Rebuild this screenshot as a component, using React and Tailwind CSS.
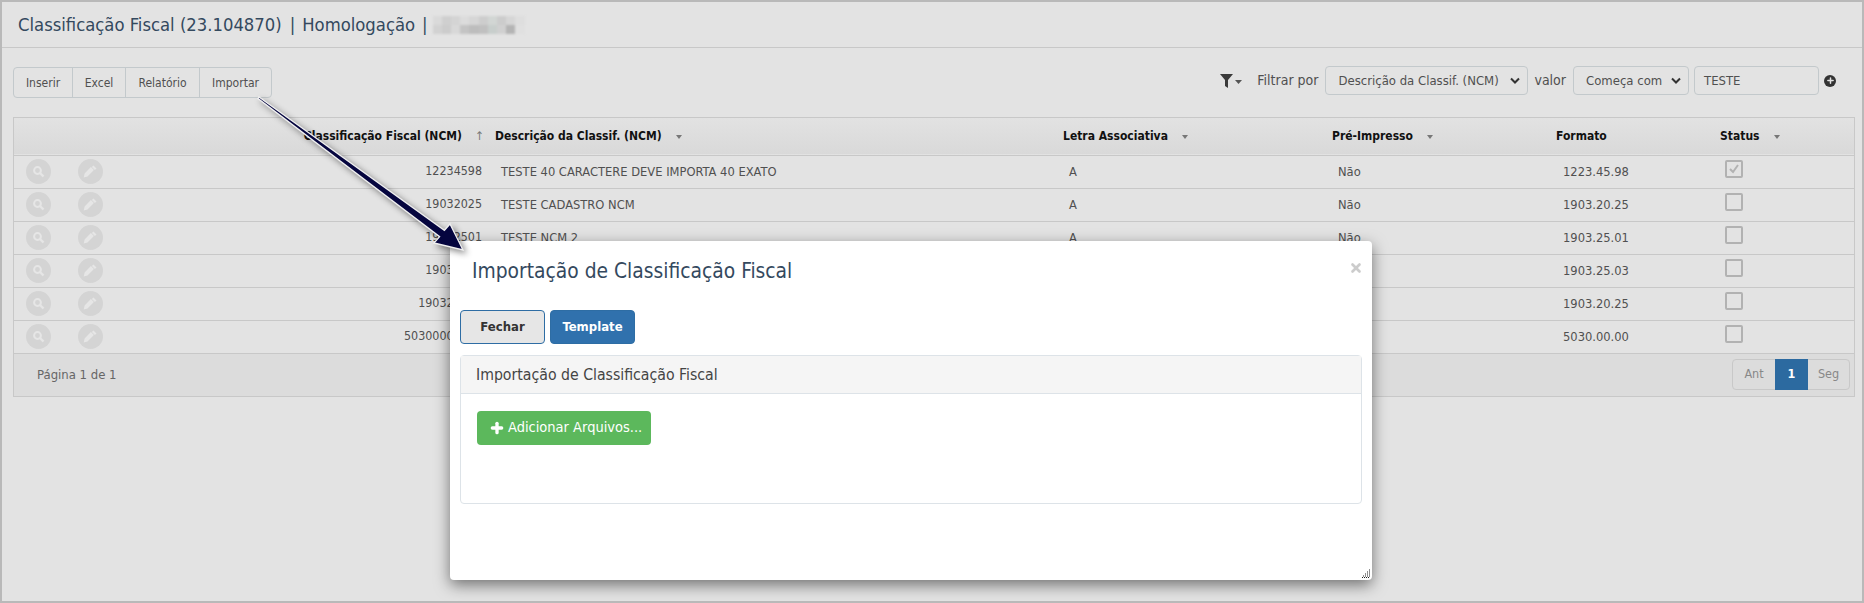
import React from 'react';
import { Plus, X } from 'lucide-react';

const rows = [
  { ncm: '12234598', desc: 'TESTE 40 CARACTERE DEVE IMPORTA 40 EXATO', fmt: '1223.45.98', on: true },
  { ncm: '19032025', desc: 'TESTE CADASTRO NCM', fmt: '1903.20.25' },
  { ncm: '19032501', desc: 'TESTE NCM 2', fmt: '1903.25.01' },
  { ncm: '19032503', desc: 'TESTE NCM 3', fmt: '1903.25.03' },
  { ncm: '190320251', desc: 'TESTE NCM 4', fmt: '1903.20.25' },
  { ncm: '50300000000', desc: 'TESTE NCM 5', fmt: '5030.00.00' },
];

// pixelated name in the title
const mosaicTop = ['bg-[#dadada]', 'bg-[#cfcfcf]', 'bg-[#d4d4d4]', 'bg-[#dcdcdc]', 'bg-[#d6d6d6]', 'bg-[#cdcdcd]', 'bg-[#d2d6d4]', 'bg-[#cccccc]', 'bg-[#d6d6d6]', 'bg-[#dedede]'];
const mosaicBottom = ['bg-[#d2d2d2]', 'bg-[#cccccc]', 'bg-[#d8d8d8]', 'bg-[#c4c4c4]', 'bg-[#bdbdbd]', 'bg-[#c0c0c0]', 'bg-[#c8cecc]', 'bg-[#d0d0d0]', 'bg-[#b4b4b4]', 'bg-[#e0e0e0]'];

const Caret = () => <span className="inline-block ml-[14px] align-middle border-x-[3px] border-t-[4px] border-x-transparent border-t-[#777]" />;

const Chev = () => (
  <svg width="10" height="8" viewBox="0 0 10 8" fill="none" stroke="#333" strokeWidth="2"><path d="M1 1.5l4 4 4-4" /></svg>
);

const RoundIcon = ({ kind }) => (
  <span className="w-[25px] h-[25px] rounded-full bg-[#d4d4d4] flex items-center justify-center">
    {kind === 'search' ? (
      <svg width="13" height="13" viewBox="0 0 13 13" fill="none" stroke="#e6e6e6"><circle cx="5.5" cy="5.5" r="3.4" strokeWidth="2" /><path d="M8 8l3.5 3.5" strokeWidth="2.4" /></svg>
    ) : (
      <svg width="15" height="15" viewBox="0 0 15 15" fill="#e6e6e6"><path d="M10.5 1.5l3 3-1.6 1.6-3-3zM7.9 3.1l3 3-6.4 6.4-3.8.9.9-3.8z" /></svg>
    )}
  </span>
);

export default function App() {
  return (
    <div className="relative w-[1864px] h-[603px] overflow-hidden bg-[#e3e3e3] border-2 border-[#b9b9b9] text-[12px] text-[#505050] font-['DejaVu_Sans_Condensed','DejaVu_Sans',sans-serif]">
      <div className="h-[46px] border-b border-[#c8c8c8] pl-[16px] flex items-center text-[18.3px] text-[#34495e]">
        <span>Classificação Fiscal (23.104870)</span>
        <span className="ml-[8px]">|</span>
        <span className="ml-[7px]">Homologação</span>
        <span className="ml-[7px]">|</span>
        <div className="ml-[5px] w-[92px] blur-[1px]">
          <div className="flex">{mosaicTop.map((c, i) => <span key={i} className={`flex-1 h-[9px] ${c}`} />)}</div>
          <div className="flex">{mosaicBottom.map((c, i) => <span key={i} className={`flex-1 h-[9px] ${c}`} />)}</div>
        </div>
      </div>

      <div className="h-[69px] pl-[11px] pr-[26px] flex items-start justify-between">
        <div className="mt-[19px] h-[31px] flex border border-[#c3c9cc] rounded-[4px]">
          <span className="w-[59px] flex items-center justify-center border-r border-[#c3c9cc]">Inserir</span>
          <span className="w-[53px] flex items-center justify-center border-r border-[#c3c9cc]">Excel</span>
          <span className="w-[74px] flex items-center justify-center border-r border-[#c3c9cc]">Relatório</span>
          <span className="w-[71px] flex items-center justify-center">Importar</span>
        </div>
        <div className="mt-[18px] flex items-center h-[29px] text-[14px]">
          <svg width="22" height="14" viewBox="0 0 22 14" fill="#3a3a3a"><path d="M0 0h13L8 6v8l-3-2V6z" /><path d="M15 6h7l-3.5 4z" fill="#555" /></svg>
          <span className="ml-[15px]">Filtrar por</span>
          <span className="ml-[7px] w-[203px] h-[29px] border border-[#c3c9cc] rounded-[4px] pl-[12px] pr-[7px] flex items-center justify-between text-[13px]">Descrição da Classif. (NCM)<Chev /></span>
          <span className="ml-[6px]">valor</span>
          <span className="ml-[7px] w-[116px] h-[29px] border border-[#c3c9cc] rounded-[4px] pl-[12px] pr-[7px] flex items-center justify-between text-[13px]">Começa com<Chev /></span>
          <span className="ml-[5px] w-[125px] h-[29px] border border-[#c3c9cc] rounded-[4px] pl-[9px] flex items-center text-[13px]">TESTE</span>
          <span className="ml-[5px] w-[12px] h-[12px] rounded-full bg-[#333] flex items-center justify-center"><Plus size={9} strokeWidth={4} color="#e3e3e3" /></span>
        </div>
      </div>

      <div className="ml-[11px] mr-[7px] border border-[#c8c8c8]">
        <table className="w-full table-fixed border-collapse">
          <colgroup>
            <col className="w-[52px]" /><col className="w-[50px]" /><col className="w-[373px]" /><col className="w-[568px]" /><col className="w-[269px]" /><col className="w-[224px]" /><col className="w-[164px]" /><col />
          </colgroup>
          <thead>
            <tr className="h-[37px] bg-gradient-to-b from-[#e2e2e2] to-[#d9d9d9] text-[#111] font-bold border-b border-[#c8c8c8]">
              <th /><th />
              <th className="text-right pr-[4px] font-bold">Classificação Fiscal (NCM)<span className="inline-block ml-[12px] w-[11px] text-center font-normal text-[#777]">↑</span></th>
              <th className="text-left pl-[6px] font-bold">Descrição da Classif. (NCM)<Caret /></th>
              <th className="text-left pl-[6px] font-bold">Letra Associativa<Caret /></th>
              <th className="text-left pl-[6px] font-bold">Pré-Impresso<Caret /></th>
              <th className="text-left pl-[6px] font-bold">Formato</th>
              <th className="text-left pl-[6px] font-bold">Status<Caret /></th>
            </tr>
          </thead>
          <tbody className="text-[12.8px]">
            {rows.map(r => (
              <tr key={r.ncm} className="h-[33px] border-b border-[#c8c8c8]">
                <td className="pl-[12px]"><RoundIcon kind="search" /></td>
                <td className="pl-[12px]"><RoundIcon kind="edit" /></td>
                <td className="text-right pr-[7px] text-[12.4px]">{r.ncm}</td>
                <td className="pl-[12px]">{r.desc}</td>
                <td className="pl-[12px]">A</td>
                <td className="pl-[12px]">Não</td>
                <td className="pl-[13px]">{r.fmt}</td>
                <td className="pl-[11px] align-top pt-[4px]">
                  <span className="w-[18px] h-[18px] border-2 border-[#b2b2b2] rounded-[2px] flex items-center justify-center">
                    {r.on && <svg width="12" height="12" viewBox="0 0 12 12" fill="none" stroke="#b2b2b2" strokeWidth="2"><path d="M2 6l3 3 5-7" /></svg>}
                  </span>
                </td>
              </tr>
            ))}
          </tbody>
        </table>
        <div className="h-[42px] bg-[#dcdcdc] pl-[23px] pr-[4px] flex items-center justify-between text-[#666] text-[13px]">
          <span>Página 1 de 1</span>
          <div className="h-[31px] w-[118px] flex items-center border border-[#c8c8c8] rounded-[4px] text-[#888] text-[12.5px]">
            <span className="w-[42px] text-center">Ant</span>
            <span className="w-[33px] h-[31px] bg-[#2c6aa0] text-white font-bold flex items-center justify-center">1</span>
            <span className="flex-1 text-center">Seg</span>
          </div>
        </div>
      </div>

      <div className="absolute left-[448px] top-[239px] w-[922px] h-[339px] bg-white rounded-[4px] shadow-[0_5px_15px_rgba(0,0,0,0.5)]">
        <div className="pl-[22px] pt-[16px] pb-[1px] text-[20.8px] leading-[28px] text-[#34495e]">Importação de Classificação Fiscal</div>
        <X size={14} strokeWidth={4.5} color="#ccc" className="absolute right-[9px] top-[20px]" />
        <div className="ml-[10px] mt-[24px] flex gap-[5px] text-[13px] font-bold">
          <span className="w-[85px] h-[34px] bg-[#e6e6e6] border border-[#2e6da4] rounded-[4px] text-[#333] flex items-center justify-center">Fechar</span>
          <span className="w-[85px] h-[34px] bg-[#3071ad] border border-[#2e6da4] rounded-[4px] text-white flex items-center justify-center">Template</span>
        </div>
        <div className="mx-[10px] mt-[11px] h-[149px] border border-[#dde3e8] rounded-[4px]">
          <div className="h-[38px] bg-[#f5f5f5] border-b border-[#dde3e8] pl-[15px] flex items-center text-[15.7px] text-[#444]">Importação de Classificação Fiscal</div>
          <div className="mt-[17px] ml-[16px] w-[174px] h-[34px] bg-[#5cb85c] rounded-[4px] text-white text-[14.5px] flex items-center pl-[12px] gap-[3px]"><Plus size={16} strokeWidth={5} />Adicionar Arquivos...</div>
        </div>
        <svg className="absolute right-[2px] bottom-[2px]" width="9" height="9" viewBox="0 0 9 9" fill="none" stroke="#222" strokeDasharray="1 1"><path d="M8.5 .5v8M6.5 2.5v6M4.5 4.5v4M2.5 6.5v2M1 8.5h7.5" /></svg>
      </div>

      <svg className="absolute left-0 top-0 pointer-events-none" width="480" height="260" viewBox="2 2 480 260" style={{ filter: 'drop-shadow(3px 3px 3px rgba(0,0,0,0.45))' }}>
        <path d="M259 97L444.4 230.3l5.6-6.3 13 26-29-7 5.6-6.3L258 98.5z" fill="#05053f" stroke="#f0f0f0" strokeWidth="1.3" />
      </svg>
    </div>
  );
}
